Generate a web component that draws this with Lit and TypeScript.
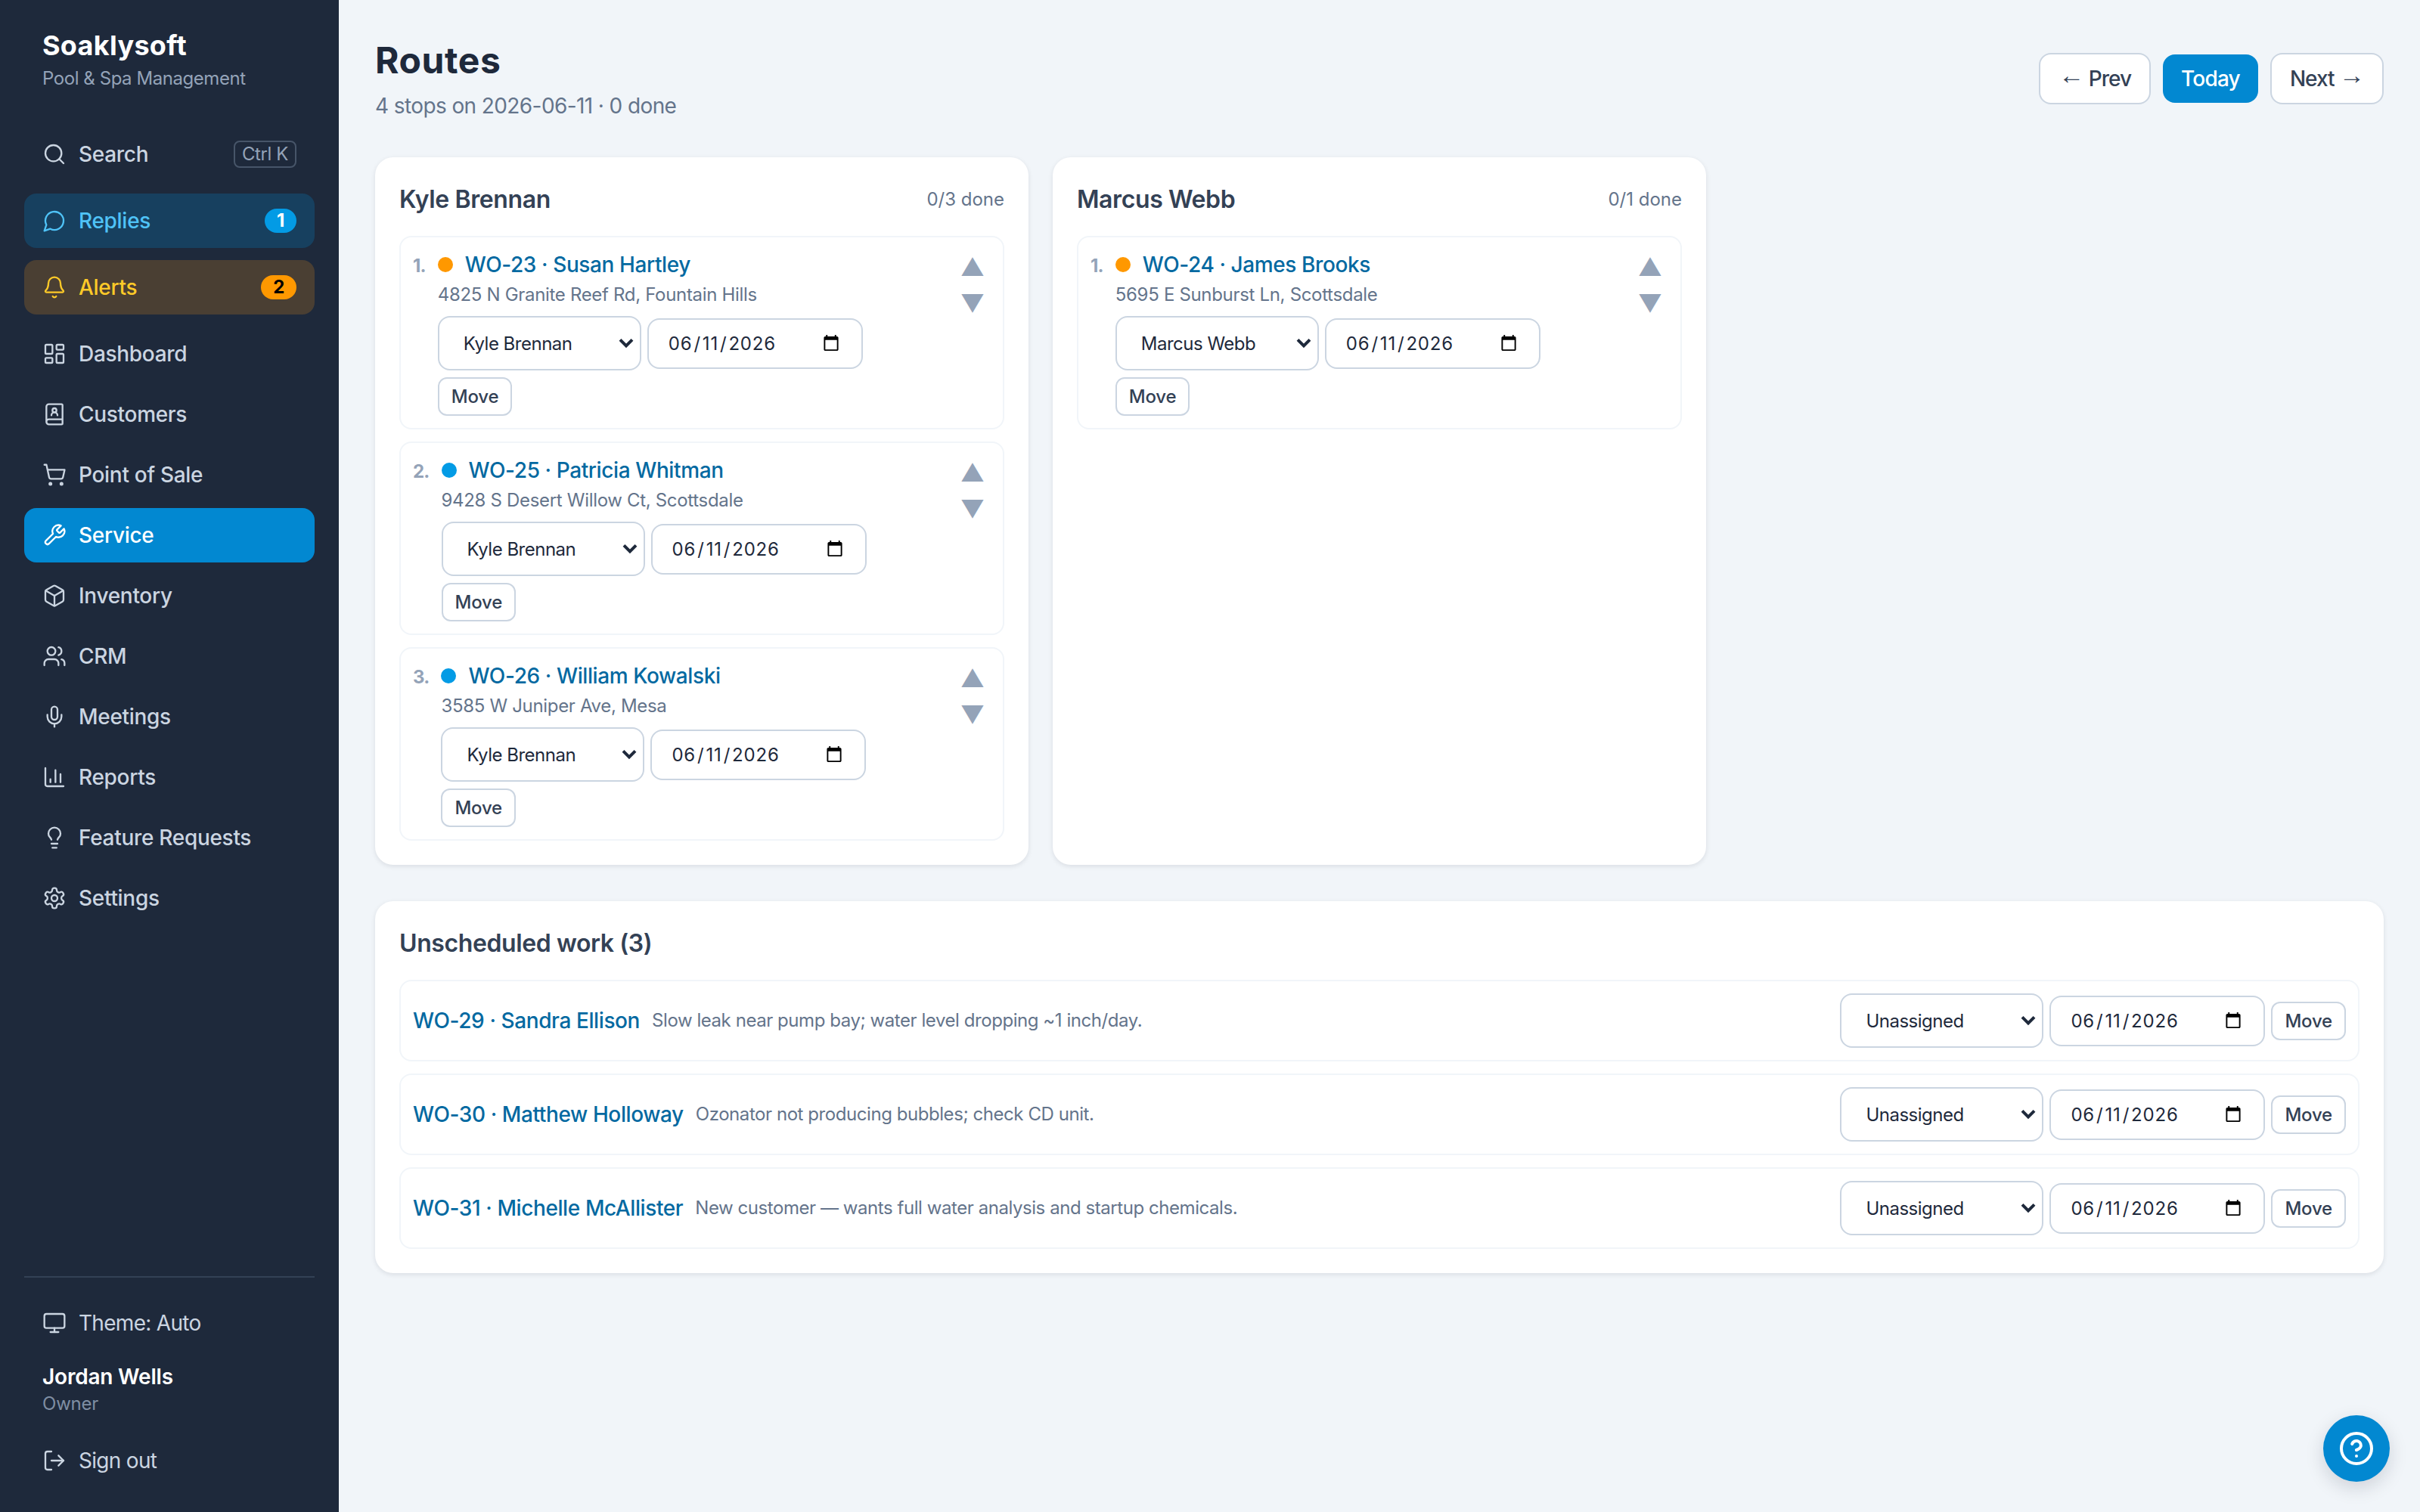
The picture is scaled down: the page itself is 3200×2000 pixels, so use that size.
import { LitElement, html, css, svg } from "lit";
import { customElement } from "lit/decorators.js";

const icons: Record<string, unknown> = {
  search: svg`<circle cx="11" cy="11" r="8"/><path d="m21 21-4.3-4.3"/>`,
  replies: svg`<path d="M7.9 20A9 9 0 1 0 4 16.1L2 22Z"/>`,
  bell: svg`<path d="M10.268 21a2 2 0 0 0 3.464 0"/><path d="M3.262 15.326A1 1 0 0 0 4 17h16a1 1 0 0 0 .74-1.673C19.41 13.956 18 12.499 18 8A6 6 0 0 0 6 8c0 4.499-1.411 5.956-2.738 7.326"/>`,
  dashboard: svg`<rect width="7" height="9" x="3" y="3" rx="1"/><rect width="7" height="5" x="14" y="3" rx="1"/><rect width="7" height="9" x="14" y="12" rx="1"/><rect width="7" height="5" x="3" y="16" rx="1"/>`,
  customers: svg`<path d="M15 13a3 3 0 1 0-6 0"/><path d="M4 19.5v-15A2.5 2.5 0 0 1 6.5 2H19a1 1 0 0 1 1 1v18a1 1 0 0 1-1 1H6.5a1 1 0 0 1 0-5H20"/><circle cx="12" cy="8" r="2"/>`,
  cart: svg`<circle cx="8" cy="21" r="1"/><circle cx="19" cy="21" r="1"/><path d="M2.05 2.05h2l2.66 12.42a2 2 0 0 0 2 1.58h9.78a2 2 0 0 0 1.95-1.57l1.65-7.43H5.12"/>`,
  wrench: svg`<path d="M14.7 6.3a1 1 0 0 0 0 1.4l1.6 1.6a1 1 0 0 0 1.4 0l3.77-3.77a6 6 0 0 1-7.94 7.94l-6.91 6.91a2.12 2.12 0 0 1-3-3l6.91-6.91a6 6 0 0 1 7.94-7.94l-3.76 3.76z"/>`,
  box: svg`<path d="M21 8a2 2 0 0 0-1-1.73l-7-4a2 2 0 0 0-2 0l-7 4A2 2 0 0 0 3 8v8a2 2 0 0 0 1 1.73l7 4a2 2 0 0 0 2 0l7-4A2 2 0 0 0 21 16Z"/><path d="m3.3 7 8.7 5 8.7-5"/><path d="M12 22V12"/>`,
  users: svg`<path d="M16 21v-2a4 4 0 0 0-4-4H6a4 4 0 0 0-4 4v2"/><circle cx="9" cy="7" r="4"/><path d="M22 21v-2a4 4 0 0 0-3-3.87"/><path d="M16 3.13a4 4 0 0 1 0 7.75"/>`,
  mic: svg`<path d="M12 2a3 3 0 0 0-3 3v7a3 3 0 0 0 6 0V5a3 3 0 0 0-3-3Z"/><path d="M19 10v2a7 7 0 0 1-14 0v-2"/><path d="M12 19v3"/>`,
  chart: svg`<path d="M3 3v16a2 2 0 0 0 2 2h16"/><path d="M18 17V9"/><path d="M13 17V5"/><path d="M8 17v-3"/>`,
  bulb: svg`<path d="M15 14c.2-1 .7-1.7 1.5-2.5 1-.9 1.5-2.2 1.5-3.5A6 6 0 0 0 6 8c0 1 .2 2.2 1.5 3.5.7.7 1.3 1.5 1.5 2.5"/><path d="M9 18h6"/><path d="M10 22h4"/>`,
  gear: svg`<path d="M12.22 2h-.44a2 2 0 0 0-2 2v.18a2 2 0 0 1-1 1.73l-.43.25a2 2 0 0 1-2 0l-.15-.08a2 2 0 0 0-2.73.73l-.22.38a2 2 0 0 0 .73 2.73l.15.1a2 2 0 0 1 1 1.72v.51a2 2 0 0 1-1 1.74l-.15.09a2 2 0 0 0-.73 2.73l.22.38a2 2 0 0 0 2.73.73l.15-.08a2 2 0 0 1 2 0l.43.25a2 2 0 0 1 1 1.73V20a2 2 0 0 0 2 2h.44a2 2 0 0 0 2-2v-.18a2 2 0 0 1 1-1.73l.43-.25a2 2 0 0 1 2 0l.15.08a2 2 0 0 0 2.73-.73l.22-.39a2 2 0 0 0-.73-2.73l-.15-.08a2 2 0 0 1-1-1.74v-.5a2 2 0 0 1 1-1.74l.15-.09a2 2 0 0 0 .73-2.73l-.22-.38a2 2 0 0 0-2.73-.73l-.15.08a2 2 0 0 1-2 0l-.43-.25a2 2 0 0 1-1-1.73V4a2 2 0 0 0-2-2z"/><circle cx="12" cy="12" r="3"/>`,
  monitor: svg`<rect width="20" height="14" x="2" y="3" rx="2"/><path d="M8 21h8"/><path d="M12 17v4"/>`,
  logout: svg`<path d="M9 21H5a2 2 0 0 1-2-2V5a2 2 0 0 1 2-2h4"/><path d="m16 17 5-5-5-5"/><path d="M21 12H9"/>`,
  help: svg`<circle cx="12" cy="12" r="10"/><path d="M9.09 9a3 3 0 0 1 5.83 1c0 2-3 3-3 3"/><path d="M12 17h.01"/>`,
};

const navItems = [
  { label: "Dashboard", icon: "dashboard" },
  { label: "Customers", icon: "customers" },
  { label: "Point of Sale", icon: "cart" },
  { label: "Service", icon: "wrench", active: true },
  { label: "Inventory", icon: "box" },
  { label: "CRM", icon: "users" },
  { label: "Meetings", icon: "mic" },
  { label: "Reports", icon: "chart" },
  { label: "Feature Requests", icon: "bulb" },
  { label: "Settings", icon: "gear" },
];

const people = ["Unassigned", "Kyle Brennan", "Marcus Webb"];

const routes = [
  {
    tech: "Kyle Brennan",
    done: "0/3 done",
    stops: [
      { wo: "WO-23 · Susan Hartley", addr: "4825 N Granite Reef Rd, Fountain Hills", dot: "orange" },
      { wo: "WO-25 · Patricia Whitman", addr: "9428 S Desert Willow Ct, Scottsdale", dot: "blue" },
      { wo: "WO-26 · William Kowalski", addr: "3585 W Juniper Ave, Mesa", dot: "blue" },
    ],
  },
  {
    tech: "Marcus Webb",
    done: "0/1 done",
    stops: [{ wo: "WO-24 · James Brooks", addr: "5695 E Sunburst Ln, Scottsdale", dot: "orange" }],
  },
];

const unscheduled = [
  { wo: "WO-29 · Sandra Ellison", note: "Slow leak near pump bay; water level dropping ~1 inch/day." },
  { wo: "WO-30 · Matthew Holloway", note: "Ozonator not producing bubbles; check CD unit." },
  { wo: "WO-31 · Michelle McAllister", note: "New customer — wants full water analysis and startup chemicals." },
];

@customElement("app-root")
export class AppRoot extends LitElement {
  static styles = css`
    :host {
      display: block;
      position: relative;
      zoom: 2;
      height: 1000px;
      overflow: hidden;
      background: #f1f5f9;
      color: #1e293b;
      font-family: Inter, "Noto Sans", sans-serif;
      font-size: 14px;
      line-height: 20px;
    }
    * {
      box-sizing: border-box;
    }
    .shell {
      display: flex;
      height: 100%;
    }
    .sidebar {
      width: 224px;
      flex: none;
      display: flex;
      flex-direction: column;
      padding: 16px;
      background: #1e293b;
      color: #cbd5e1;
    }
    .brand {
      padding: 0 12px;
      margin-bottom: 24px;
    }
    .brand-name {
      font-size: 18px;
      line-height: 28px;
      font-weight: 700;
      letter-spacing: 0.15px;
      color: #fff;
    }
    .brand-sub {
      font-size: 12px;
      line-height: 16px;
      letter-spacing: -0.22px;
      color: #94a3b8;
    }
    .nav {
      display: flex;
      flex-direction: column;
      gap: 4px;
    }
    .item {
      display: flex;
      align-items: center;
      gap: 8px;
      height: 36px;
      padding: 0 12px;
      border-radius: 8px;
      font-weight: 500;
      letter-spacing: -0.15px;
    }
    .item.spaced {
      margin-bottom: 8px;
    }
    .item.plain {
      font-weight: 400;
      letter-spacing: -0.35px;
    }
    .item .grow {
      flex: 1;
    }
    .item.replies {
      background: #17405f;
      color: #4fc3f7;
    }
    .item.alerts {
      background: #4a3f33;
      color: #ffca28;
    }
    .item.active {
      background: #0288d1;
      color: #fff;
    }
    .icon {
      width: 16px;
      height: 16px;
      flex: none;
      fill: none;
      stroke: currentColor;
      stroke-width: 1.75;
      stroke-linecap: round;
      stroke-linejoin: round;
    }
    .kbd {
      height: 18px;
      padding: 0 4.5px;
      border: 1px solid #475569;
      border-radius: 4px;
      font-size: 12px;
      font-weight: 400;
      line-height: 16px;
      letter-spacing: -0.2px;
      color: #94a3b8;
    }
    .badge {
      height: 16px;
      padding: 0 8px;
      border-radius: 8px;
      font-size: 12px;
      line-height: 16px;
      font-weight: 700;
      color: #fff;
      background: #039be5;
    }
    .badge.warn {
      background: #ff9800;
      color: #000;
    }
    .footer {
      margin-top: auto;
      padding-top: 12px;
      border-top: 1px solid #334155;
      display: flex;
      flex-direction: column;
      gap: 4px;
    }
    .user {
      padding: 3.5px 12px 4.5px;
      margin-bottom: 3px;
    }
    .user-name {
      font-weight: 600;
      letter-spacing: -0.1px;
      color: #fff;
    }
    .user-role {
      font-size: 12px;
      line-height: 16px;
      letter-spacing: -0.1px;
      color: #7f8ea3;
    }
    .main {
      flex: 1;
      min-width: 0;
      padding: 24px;
    }
    .header {
      display: flex;
      align-items: center;
      justify-content: space-between;
      margin-bottom: 24px;
    }
    h1 {
      margin: 0;
      font-size: 24px;
      line-height: 32px;
      font-weight: 700;
      letter-spacing: 0.3px;
      color: #1e293b;
    }
    .subtitle {
      margin-top: 4px;
      letter-spacing: -0.3px;
      color: #64748b;
    }
    .pager {
      display: flex;
      align-items: center;
      gap: 8px;
    }
    .pager button {
      padding: 8px 12px;
      border: 1px solid #cbd5e1;
      border-radius: 8px;
      background: #fff;
      color: #334155;
      font: 500 14px/16px Inter, sans-serif;
      letter-spacing: -0.5px;
    }
    .pager button.primary {
      border: 0;
      background: #0288d1;
      color: #fff;
      letter-spacing: -0.4px;
    }
    .pager .arrow {
      font-family: "Liberation Sans", sans-serif;
      font-size: 17px;
      font-weight: 400;
      line-height: 0;
      vertical-align: 1.5px;
    }
    .routes {
      display: grid;
      grid-template-columns: repeat(3, 1fr);
      gap: 16px;
      margin-bottom: 24px;
    }
    .card {
      padding: 16px;
      border-radius: 12px;
      background: #fff;
      box-shadow: 0 1px 3px rgba(15, 23, 42, 0.1);
    }
    .card-head {
      display: flex;
      align-items: center;
      justify-content: space-between;
      margin-bottom: 12px;
    }
    h2 {
      margin: 0;
      font-size: 16px;
      line-height: 24px;
      font-weight: 600;
      letter-spacing: -0.2px;
      color: #334155;
    }
    .count {
      font-size: 12px;
      color: #64748b;
    }
    .list {
      display: flex;
      flex-direction: column;
      gap: 8px;
    }
    .stop {
      display: flex;
      gap: 8px;
      padding: 8px;
      border: 1px solid #f1f5f9;
      border-radius: 8px;
    }
    .num {
      font-size: 12px;
      line-height: 22px;
      font-weight: 700;
      letter-spacing: -0.4px;
      color: #94a3b8;
    }
    .stop-body {
      flex: 1;
      min-width: 0;
    }
    .stop-title {
      display: flex;
      align-items: center;
      gap: 8px;
    }
    .dot {
      width: 10px;
      height: 10px;
      border-radius: 50%;
    }
    .dot.orange {
      background: #ff9800;
    }
    .dot.blue {
      background: #039be5;
    }
    a {
      color: #0369a1;
      font-weight: 500;
      letter-spacing: -0.2px;
      text-decoration: none;
    }
    .addr {
      margin-top: 2px;
      font-size: 12px;
      line-height: 16px;
      letter-spacing: -0.16px;
      color: #64748b;
    }
    .controls {
      display: flex;
      flex-wrap: wrap;
      align-items: center;
      gap: 4.5px 4px;
    }
    .stop .controls {
      margin-top: 6px;
    }
    select,
    input {
      border: 1px solid #cbd5e1;
      border-radius: 8px;
      color: #1e293b;
      font: 400 12px Inter, sans-serif;
    }
    select {
      appearance: none;
      width: 134.5px;
      height: 36px;
      padding: 8px 24px 8px 16px;
      letter-spacing: -0.25px;
      background: #fff url("data:image/svg+xml,%3Csvg xmlns='http://www.w3.org/2000/svg' width='10' height='7' viewBox='0 0 10 7'%3E%3Cpath d='M1 1.2 5 5.2 9 1.2' fill='none' stroke='%231e293b' stroke-width='2'/%3E%3C/svg%3E") no-repeat right 4px center;
    }
    input {
      width: 142.5px;
      height: 33.5px;
      padding: 8px 12px;
      background: #fff;
      letter-spacing: 0.4px;
    }
    .move {
      padding: 4px 8px;
      border: 1px solid #cbd5e1;
      border-radius: 6px;
      background: #fff;
      color: #334155;
      font: 500 12px/15.5px Inter, sans-serif;
      letter-spacing: -0.1px;
    }
    .arrows {
      display: flex;
      flex-direction: column;
    }
    .arrows button {
      height: 24px;
      padding: 0 4px;
      border: 0;
      background: none;
      color: #94a3b8;
      font: 16px/24px Inter, "DejaVu Sans", sans-serif;
    }
    .row {
      display: flex;
      align-items: center;
      gap: 8px;
      padding: 8px;
      border: 1px solid #f1f5f9;
      border-radius: 8px;
    }
    .note {
      flex: 1;
      min-width: 0;
      font-size: 12px;
      letter-spacing: -0.22px;
      color: #64748b;
    }
    .help {
      position: absolute;
      right: 20px;
      bottom: 20px;
      width: 44px;
      height: 44px;
      display: flex;
      align-items: center;
      justify-content: center;
      border: 0;
      border-radius: 50%;
      background: #0288d1;
      color: #fff;
      box-shadow: 0 4px 12px rgba(15, 23, 42, 0.15);
    }
    .help .icon {
      width: 24px;
      height: 24px;
      stroke-width: 2;
    }
  `;

  icon(name: string) {
    return html`<svg class="icon" viewBox="0 0 24 24">${icons[name]}</svg>`;
  }

  controls(who: string) {
    return html`
      <select>
        ${people.map((p) => html`<option ?selected=${p === who}>${p}</option>`)}
      </select>
      <input type="date" value="2026-06-11" />
      <button class="move">Move</button>
    `;
  }

  renderSidebar() {
    return html`
      <aside class="sidebar">
        <div class="brand">
          <div class="brand-name">Soaklysoft</div>
          <div class="brand-sub">Pool &amp; Spa Management</div>
        </div>
        <div class="item spaced">
          ${this.icon("search")}<span class="grow">Search</span><span class="kbd">Ctrl K</span>
        </div>
        <div class="item spaced replies">
          ${this.icon("replies")}<span class="grow">Replies</span><span class="badge">1</span>
        </div>
        <div class="item spaced alerts">
          ${this.icon("bell")}<span class="grow">Alerts</span><span class="badge warn">2</span>
        </div>
        <nav class="nav">
          ${navItems.map(
            (n) => html`<div class="item ${n.active ? "active" : ""}">${this.icon(n.icon)}<span>${n.label}</span></div>`
          )}
        </nav>
        <div class="footer">
          <div class="item plain">${this.icon("monitor")}<span>Theme: Auto</span></div>
          <div class="user">
            <div class="user-name">Jordan Wells</div>
            <div class="user-role">Owner</div>
          </div>
          <div class="item plain">${this.icon("logout")}<span>Sign out</span></div>
        </div>
      </aside>
    `;
  }

  render() {
    return html`
      <div class="shell">
        ${this.renderSidebar()}
        <main class="main">
          <header class="header">
            <div>
              <h1>Routes</h1>
              <div class="subtitle">4 stops on 2026-06-11 · 0 done</div>
            </div>
            <div class="pager">
              <button><span class="arrow">←</span> Prev</button>
              <button class="primary">Today</button>
              <button>Next <span class="arrow">→</span></button>
            </div>
          </header>
          <section class="routes">
            ${routes.map(
              (r) => html`
                <div class="card">
                  <div class="card-head">
                    <h2>${r.tech}</h2>
                    <span class="count">${r.done}</span>
                  </div>
                  <div class="list">
                    ${r.stops.map(
                      (s, i) => html`
                        <div class="stop">
                          <span class="num">${i + 1}.</span>
                          <div class="stop-body">
                            <div class="stop-title">
                              <span class="dot ${s.dot}"></span>
                              <a href="#">${s.wo}</a>
                            </div>
                            <div class="addr">${s.addr}</div>
                            <div class="controls">${this.controls(r.tech)}</div>
                          </div>
                          <div class="arrows">
                            <button>▲</button>
                            <button>▼</button>
                          </div>
                        </div>
                      `
                    )}
                  </div>
                </div>
              `
            )}
          </section>
          <section class="card">
            <div class="card-head"><h2>Unscheduled work (3)</h2></div>
            <div class="list">
              ${unscheduled.map(
                (u) => html`
                  <div class="row">
                    <a href="#">${u.wo}</a>
                    <span class="note">${u.note}</span>
                    <div class="controls">${this.controls("Unassigned")}</div>
                  </div>
                `
              )}
            </div>
          </section>
        </main>
      </div>
      <button class="help">${this.icon("help")}</button>
    `;
  }
}
